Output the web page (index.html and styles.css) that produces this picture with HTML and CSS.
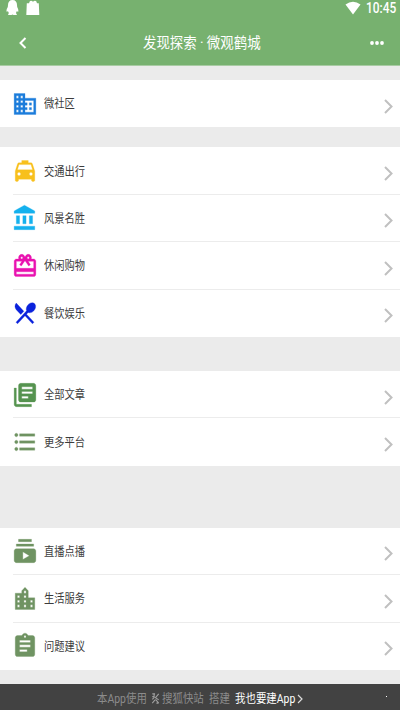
FILE: index.html
```html
<!DOCTYPE html>
<html lang="zh-CN">
<head>
<meta charset="utf-8">
<title>发现探索 · 微观鹤城</title>
<link rel="stylesheet" href="styles.css">
</head>
<body>
<svg class="defs"><symbol id="next" viewBox="0 0 9 15"><path d="M1 1L7.500 7.500L1 14" fill="none" stroke="#c0c0c0" stroke-width="2"/></symbol></svg>
<header class="header">
  <div class="status">
    <svg class="bell" viewBox="0 0 14 16"><path d="M7.500 0C4.500 0 3 2 3 5L2.800 7C1.800 8.500 1.300 10 1.600 11.800L3 11.200L3.800 13L3 15H6.500L7.500 14.600L8.500 15H12L11 13L11.700 11.200L13.300 11.800C13.600 10 13.100 8.500 12.200 7L12 5C12 2 10.500 0 7.500 0Z"/></svg>
    <svg class="bag" viewBox="0 0 14 16"><path d="M.8 3.200H3Q3.600.8 5 .8Q6 .8 7 1.800Q8 .8 9 .8Q10.500.8 11 3.200H12.800L13.300 15H.3Z"/></svg>
    <svg class="wifi" viewBox="0 0 16 14"><path d="M.5 3.500Q8-2 15.500 3.500L8 13.500Z"/></svg>
    <span class="time">10:45</span>
  </div>
  <div class="titlebar">
    <svg class="back" viewBox="0 0 8 12"><path d="M6.500 1L1.500 6L6.500 11"/></svg>
    <h1 class="title"><span>发现探索 · 微观鹤城</span></h1>
    <svg class="more" viewBox="0 0 14 4"><circle cx="2" cy="2" r="1.900"/><circle cx="7" cy="2" r="1.900"/><circle cx="12" cy="2" r="1.900"/></svg>
  </div>
</header>
<main class="content">
  <ul class="group">
    <li class="row blue"><svg class="icon" viewBox="0 0 24 24" preserveAspectRatio="none"><path d="M12 7V3H2v18h20V7H12zM6 19H4v-2h2v2zm0-4H4v-2h2v2zm0-4H4V9h2v2zm0-4H4V5h2v2zm4 12H8v-2h2v2zm0-4H8v-2h2v2zm0-4H8V9h2v2zm0-4H8V5h2v2zm10 12h-8v-2h2v-2h-2v-2h2v-2h-2V9h8v10zm-2-8h-2v2h2v-2zm0 4h-2v2h2v-2z"/></svg><span class="label">微社区</span><svg class="next"><use href="#next"/></svg></li>
  </ul>
  <ul class="group services">
    <li class="row yellow"><svg class="icon" viewBox="0 0 24 24" preserveAspectRatio="none"><path d="M18.920 6.010C18.720 5.420 18.160 5 17.500 5H15V3H9v2H6.500c-.66 0-1.210.42-1.420 1.010L3 12v8c0 .55.45 1 1 1h1c.55 0 1-.45 1-1v-1h12v1c0 .55.45 1 1 1h1c.55 0 1-.45 1-1v-8l-2.080-5.990zM6.500 16c-.83 0-1.500-.67-1.500-1.500S5.670 13 6.500 13s1.500.67 1.500 1.500S7.330 16 6.500 16zm11 0c-.83 0-1.500-.67-1.500-1.500s.67-1.500 1.500-1.500 1.500.67 1.500 1.500-.67 1.500-1.500 1.500zM5 11l1.500-4.500h11L19 11H5z"/></svg><span class="label">交通出行</span><svg class="next"><use href="#next"/></svg></li>
    <li class="row cyan"><svg class="icon" viewBox="0 0 24 24" preserveAspectRatio="none"><path d="M4 10v7h3v-7H4zm6 0v7h3v-7h-3zM2 22h19v-3H2v3zm14-12v7h3v-7h-3zm-4.500-9L2 6v2h19V6l-9.500-5z"/></svg><span class="label">风景名胜</span><svg class="next"><use href="#next"/></svg></li>
    <li class="row pink"><svg class="icon" viewBox="0 0 24 24" preserveAspectRatio="none"><path d="M20 6h-2.180c.11-.31.18-.65.18-1 0-1.660-1.340-3-3-3-1.050 0-1.960.54-2.500 1.350l-.5.67-.5-.68C10.960 2.540 10.050 2 9 2 7.340 2 6 3.340 6 5c0 .35.07.69.18 1H4c-1.110 0-1.990.89-1.990 2L2 19c0 1.110.89 2 2 2h16c1.110 0 2-.89 2-2V8c0-1.110-.89-2-2-2zm-5-2c.55 0 1 .45 1 1s-.45 1-1 1-1-.45-1-1 .45-1 1-1zM9 4c.55 0 1 .45 1 1s-.45 1-1 1-1-.45-1-1 .45-1 1-1zm11 15H4v-2h16v2zm0-5H4V8h5.080L7 10.830 8.620 12 11 8.760l1-1.360 1 1.360L15.380 12 17 10.830 14.920 8H20v6z"/></svg><span class="label">休闲购物</span><svg class="next"><use href="#next"/></svg></li>
    <li class="row navy"><svg class="icon" viewBox="0 0 24 24" preserveAspectRatio="none"><path d="M8.100 13.340l2.830-2.830L3.910 3.500c-1.560 1.560-1.560 4.090 0 5.660l4.190 4.180zm6.780-1.810c1.530.71 3.680.21 5.270-1.380 1.910-1.910 2.280-4.650.81-6.120-1.460-1.460-4.200-1.100-6.120.81-1.590 1.590-2.090 3.740-1.380 5.270L3.700 19.870l1.410 1.410L12 14.410l6.880 6.880 1.410-1.410L13.410 13l1.470-1.470z"/></svg><span class="label">餐饮娱乐</span><svg class="next"><use href="#next"/></svg></li>
  </ul>
  <ul class="group articles">
    <li class="row green"><svg class="icon" viewBox="0 0 24 24" preserveAspectRatio="none"><path d="M4 6H2v14c0 1.100.9 2 2 2h14v-2H4V6zm16-4H8c-1.100 0-2 .9-2 2v12c0 1.100.9 2 2 2h12c1.100 0 2-.9 2-2V4c0-1.100-.9-2-2-2zm-1 9H9V9h10v2zm-4 4H9v-2h6v2zm4-8H9V5h10v2z"/></svg><span class="label">全部文章</span><svg class="next"><use href="#next"/></svg></li>
    <li class="row olive"><svg class="icon" viewBox="0 0 24 24" preserveAspectRatio="none"><path d="M4 10.500c-.83 0-1.500.67-1.500 1.500s.67 1.500 1.500 1.500 1.500-.67 1.500-1.500-.67-1.500-1.500-1.500zm0-6c-.83 0-1.500.67-1.500 1.500S3.170 7.500 4 7.500 5.500 6.830 5.500 6 4.830 4.500 4 4.500zm0 12c-.83 0-1.500.68-1.500 1.500s.68 1.500 1.500 1.500 1.500-.68 1.500-1.500-.67-1.500-1.500-1.500zM7 19h14v-2H7v2zm0-6h14v-2H7v2zm0-8v2h14V5H7z"/></svg><span class="label">更多平台</span><svg class="next"><use href="#next"/></svg></li>
  </ul>
  <ul class="group life">
    <li class="row olive"><svg class="icon" viewBox="0 0 24 24" preserveAspectRatio="none"><path d="M20 8H4V6h16v2zm-2-6H6v2h12V2zm4 10v8c0 1.100-.9 2-2 2H4c-1.100 0-2-.9-2-2v-8c0-1.100.9-2 2-2h16c1.100 0 2 .9 2 2zm-6 4l-6-3.270v6.530L16 16z"/></svg><span class="label">直播点播</span><svg class="next"><use href="#next"/></svg></li>
    <li class="row olive"><svg class="icon" viewBox="0 0 24 24" preserveAspectRatio="none"><path d="M15 11V5l-3-3-3 3v2H3v14h18V11h-6zm-8 8H5v-2h2v2zm0-4H5v-2h2v2zm0-4H5V9h2v2zm6 8h-2v-2h2v2zm0-4h-2v-2h2v2zm0-4h-2V9h2v2zm0-4h-2V5h2v2zm6 12h-2v-2h2v2zm0-4h-2v-2h2v2z"/></svg><span class="label">生活服务</span><svg class="next"><use href="#next"/></svg></li>
    <li class="row olive"><svg class="icon" viewBox="0 0 24 24" preserveAspectRatio="none"><path d="M19 3h-4.180C14.400 1.840 13.300 1 12 1c-1.300 0-2.400.84-2.820 2H5c-1.100 0-2 .9-2 2v14c0 1.100.9 2 2 2h14c1.100 0 2-.9 2-2V5c0-1.100-.9-2-2-2zm-7 0c.55 0 1 .45 1 1s-.45 1-1 1-1-.45-1-1 .45-1 1-1zm2 14H7v-2h7v2zm3-4H7v-2h10v2zm0-4H7V7h10v2z"/></svg><span class="label">问题建议</span><svg class="next"><use href="#next"/></svg></li>
  </ul>
</main>
<footer class="footer">
  <span class="made">本App使用</span>
  <svg class="logo" viewBox="0 0 9 12"><path d="M1 1H4M3 1V5L1 7M8 1L4.500 5L8 7.500M1 11L4 7.500M4.500 7L8 11M1 4H3M5.500 11H8"/></svg>
  <span class="brand">搜狐快站</span>
  <span class="build">搭建</span>
  <span class="cta">我也要建App</span>
  <svg class="go" viewBox="0 0 6 10"><path d="M1 1L5 5L1 9"/></svg>
  <i class="dot"></i>
</footer>
</body>
</html>
```
FILE: styles.css
```css
* { box-sizing: border-box; }
body {
  margin: 0;
  width: 400px;
  height: 710px;
  overflow: hidden;
  display: flex;
  flex-direction: column;
  background: #ebebeb;
  font-family: Roboto, "Noto Sans CJK SC", sans-serif;
}
.defs { display: none; }
svg { display: block; flex: none; }
.header { height: 66px; flex: none; background: #77b16f; color: #fff; border-bottom: 1px solid #a8cba3; }
.status { height: 17px; display: flex; padding-left: 5px; }
.status svg { fill: #fff; }
.bell { width: 14px; height: 16px; }
.bag { width: 14px; height: 16px; margin-left: 7px; }
.wifi { width: 16px; height: 14px; margin: 1px 0 0 305px; }
.time { margin-left: 5px; font-size: 14px; line-height: 17px; font-weight: 500; transform: scaleX(.85); transform-origin: left; }
.titlebar { height: 49px; display: flex; align-items: center; padding: 2px 16px 0 19px; }
.back { width: 8px; height: 12px; fill: none; stroke: #fff; stroke-width: 2; }
.title { margin: 0 0 0 116px; width: 118px; font-size: 15px; line-height: 20px; font-weight: 400; white-space: nowrap; }
.title span { display: inline-block; transform: scaleX(.895); transform-origin: left; }
.more { width: 14px; height: 4px; margin-left: auto; fill: #fff; }
.content { flex: 1; padding-top: 14px; }
.group { margin: 0 0 20px; padding: 0; list-style: none; background: #fff; }
.services { margin-bottom: 34px; }
.articles { margin-bottom: 62px; }
.life { margin-bottom: 0; }
.row { height: 47.4px; display: flex; align-items: center; padding: 0 7px 0 12px; background: linear-gradient(#ececec, #ececec) 13px 100% / 387px 1px no-repeat; }
.row:last-child { background: none; }
.icon { width: 26px; height: 28px; fill: currentColor; stroke: currentColor; stroke-width: .25; }
.label { margin: 1px 0 0 6px; color: #3c3c3c; font-size: 12px; line-height: 18px; white-space: nowrap; transform: scaleX(.855); transform-origin: left; }
.next { width: 9px; height: 15px; margin: 5px 0 0 auto; }
.blue { color: #1b7cdb; }
.yellow { color: #f8c01c; }
.cyan { color: #14b1ee; }
.pink { color: #e912b0; }
.navy { color: #0a22dc; }
.green { color: #55934f; }
.olive { color: #6f9362; }
.footer { height: 26px; flex: none; display: flex; align-items: center; padding: 3px 13px 0 97px; background: #424242; color: #8c8c8c; font-size: 12px; line-height: 18px; white-space: nowrap; }
.footer span { transform: scaleX(.87); transform-origin: left; flex: none; }
.made { width: 54px; }
.logo { width: 9px; height: 11px; fill: none; stroke: #a0a0a0; stroke-width: 1.2; }
.brand { width: 47px; margin-left: 2px; }
.build { width: 26px; }
.footer .cta { width: 62px; color: #fff; }
.go { width: 6px; height: 10px; fill: none; stroke: #ddd; stroke-width: 1.2; }
.dot { width: 1px; height: 1px; margin: -5px 0 0 auto; background: #fff; }
```
